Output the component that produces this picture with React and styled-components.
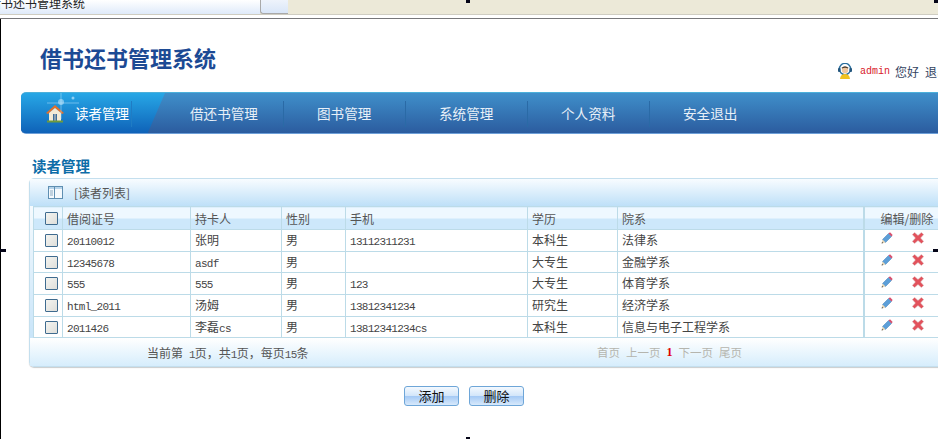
import React from "react";
import styled, { createGlobalStyle } from "styled-components";

const cjk = `"Noto Sans CJK SC", "Liberation Sans", sans-serif`;
const mono = `"Liberation Mono", "Noto Sans CJK SC", monospace`;

const GlobalStyle = createGlobalStyle`
  html, body {
    margin: 0;
    padding: 0;
    background: #fff;
    overflow: hidden;
  }
  body {
    font-family: ${cjk};
    font-size: 12px;
    color: #444;
  }
`;

const Frame = styled.div`
  position: relative;
  width: 938px;
  height: 439px;
  overflow: hidden;
`;

const BrowserStrip = styled.div`
  display: flex;
  height: 14px;
  background: #ece9d8;
  border-bottom: 1px solid #cfcdc2;
  box-shadow: 0 3px 0 #fff, 0 4px 0 #77777a;
`;

const WindowTitle = styled.div`
  width: 260px;
  overflow: hidden;
  background: linear-gradient(#ffffff, #dfeafa);
  color: #222;
  font-size: 12px;
  line-height: 6px;
  white-space: nowrap;
  text-indent: -11px;
`;

const WindowTab = styled.div`
  width: 27px;
  background: linear-gradient(#eef3fb, #d9e6f8);
  border: 1px solid #a9a9a9;
  border-top: none;
  border-right: none;
  border-bottom-left-radius: 3px;
`;

const Page = styled.div`
  width: 1100px;
  height: 420px;
  margin-top: 4px;
  border-left: 1px solid #000;
  display: flex;
  flex-direction: column;
`;

const Header = styled.div`
  display: flex;
  justify-content: space-between;
  height: 73px;
  width: 948px;
`;

const SiteTitle = styled.h1`
  margin: 24px 0 0 39px;
  font-size: 22px;
  line-height: 28px;
  font-weight: 700;
  color: #1c4a94;
`;

const UserInfo = styled.div`
  display: flex;
  align-items: center;
  align-self: flex-start;
  margin-top: 43px;
  height: 18px;
  color: #33435f;
  font-size: 12px;
`;

const UserName = styled.span`
  margin: 0 5px 0 7px;
  font-family: ${mono};
  font-size: 10px;
  color: #d8202a;
`;

const LogoutLink = styled.span`
  margin-left: 6px;
`;

const Nav = styled.nav`
  display: flex;
  flex-shrink: 0;
  box-sizing: border-box;
  height: 42px;
  margin-left: 20px;
  border-radius: 5px 0 0 5px;
  border-top: 1px solid #4cb0da;
  border-bottom: 1px solid #6d9fd8;
  background: linear-gradient(#3f8fca, #2b5c9f);
  overflow: hidden;
`;

const ActiveTab = styled.div`
  position: relative;
  display: flex;
  align-items: center;
  flex-shrink: 0;
  width: 144px;
  margin-right: -3px;
  padding-left: 24px;
  box-sizing: border-box;
  color: #fff;
  font-size: 13.5px;
  background: linear-gradient(#27a7e6, #0f62b8);
  clip-path: polygon(0 0, 100% 0, 88% 100%, 0 100%);
`;

const ActiveLabel = styled.span`
  margin-left: 10px;
`;

const Sparkle = styled.svg`
  position: absolute;
  left: 18px;
  top: 0;
`;

const TabDivider = styled.i`
  position: absolute;
  left: 110px;
  top: 8px;
  bottom: 6px;
  width: 1px;
  background: #1f7cc4;
`;

const NavItem = styled.div`
  display: flex;
  align-items: center;
  width: 122px;
  padding-left: ${(p) => (p.$first ? 28 : 33)}px;
  box-sizing: border-box;
  flex-shrink: 0;
  color: #e8f0f8;
  font-size: 13.6px;
  position: relative;
  &::after {
    content: "";
    position: absolute;
    right: 0;
    top: 8px;
    bottom: 6px;
    width: 1px;
    background: #2a6aa6;
    opacity: ${(p) => (p.$last ? 0 : 1)};
  }
`;

const SectionTitle = styled.h2`
  margin: 23px 0 3px 31px;
  font-size: 14.5px;
  line-height: 18px;
  font-weight: 700;
  color: #0d6da8;
`;

const Panel = styled.section`
  margin-left: 28px;
  padding: 0 0 0 3px;
  border: 1px solid #c4dfee;
  border-radius: 5px 0 0 5px;
  box-shadow: 0 1px 1px #c9ccce;
  background: linear-gradient(#ffffff, #bfe0f8);
`;

const PanelHead = styled.div`
  display: flex;
  align-items: center;
  height: 27px;
  margin-left: -3px;
  padding-left: 18px;
  color: #555;
  background: linear-gradient(#f8fcff, #bee0f8);
`;

const PanelHeadLabel = styled.span`
  margin-left: 11px;
`;

const Table = styled.table`
  table-layout: fixed;
  width: 1000px;
  border-collapse: collapse;
  background: #fff;
`;

const Col = styled.col`
  width: ${(p) => p.$w}px;
`;

const HeadCell = styled.th`
  height: 22px;
  padding: 0 0 0 4px;
  border: 1px solid #bcdbe8;
  font-weight: 400;
  text-align: left;
  color: #555;
  background: linear-gradient(#eef8ff 50%, #cde8fb 50%);
`;

const Cell = styled.td`
  height: 21.7px;
  padding: 0 0 2px 4px;
  box-sizing: border-box;
  border: 1px solid #bcdbe8;
  color: #444;
  white-space: nowrap;
`;

const CheckCell = styled(Cell)`
  padding: 0;
`;

const CheckHead = styled(HeadCell)`
  padding: 0;
`;

const Box = styled.input.attrs({ type: "checkbox" })`
  appearance: none;
  display: block;
  width: 13px;
  height: 13px;
  margin: 0 0 0 11px;
  border: 1px solid #3f6b8f;
  border-radius: 1px;
  background: linear-gradient(135deg, #f4f4f0, #dededa);
  box-sizing: border-box;
`;

const Latin = styled.span`
  font-family: ${mono};
  font-size: 11px;
  letter-spacing: -0.7px;
`;

const ActionHead = styled(HeadCell)`
  padding-left: 16px;
  border-left-width: 2px;
`;

const ActionCell = styled(Cell)`
  padding-left: 16px;
  border-left-width: 2px;
`;

const Actions = styled.div`
  display: flex;
  align-items: center;
  gap: 19px;
  margin-top: -2px;
`;

const PanelFoot = styled.div`
  display: flex;
  align-items: center;
  height: 28px;
  margin-left: -3px;
  padding-left: 117px;
  color: #555;
  background: linear-gradient(#ffffff, #d6edfc);
`;

const PageSummary = styled.span`
  width: 450px;
  white-space: nowrap;
`;

const Pager = styled.div`
  display: flex;
  align-items: center;
  gap: 6px;
  font-size: 11.5px;
  color: #b5b5ae;
`;

const CurrentPage = styled.b`
  font-family: "Liberation Serif", serif;
  font-size: 12px;
  color: #e00000;
`;

const ButtonRow = styled.div`
  display: flex;
  gap: 10px;
  margin: 19px 0 0 403px;
`;

const ActionButton = styled.button`
  width: 55px;
  height: 20px;
  padding: 0;
  border: 1px solid #6ea6d8;
  border-radius: 3px;
  font-family: ${cjk};
  font-size: 13px;
  line-height: 16px;
  color: #111;
  background: linear-gradient(#f4f9fe 0%, #d3e6fa 48%, #a3c9f5 50%, #d8e9fb 100%);
`;

/* little black resize handles on the window edges */
const Handle = styled.i`
  position: absolute;
  display: block;
  background: #050518;
  left: ${(p) => p.$x}px;
  top: ${(p) => p.$y}px;
  width: ${(p) => p.$w}px;
  height: ${(p) => p.$h}px;
`;

const HouseIcon = () => (
  <svg width="20" height="20" viewBox="0 0 20 20">
    <path d="M1 10 L10 2 L19 10 L17 11 L10 5 L3 11 Z" fill="#e0702c" />
    <path d="M4 10 L10 5 L16 10 V18 H4 Z" fill="#f3ecd6" />
    <rect x="8" y="11" width="4" height="7" fill="#3e6f9a" />
    <rect x="9.6" y="11" width="0.8" height="7" fill="#f3ecd6" />
    <rect x="2" y="17.5" width="16" height="2" fill="#6f9a3c" />
  </svg>
);

const UserIcon = () => (
  <svg width="16" height="16" viewBox="0 0 16 16">
    <circle cx="8" cy="6" r="5.6" fill="none" stroke="#2a6f9f" strokeWidth="1.4" />
    <rect x="1" y="5" width="2.6" height="4" rx="1" fill="#24577e" />
    <rect x="12.4" y="5" width="2.6" height="4" rx="1" fill="#24577e" />
    <circle cx="8" cy="7" r="3.2" fill="#f0c8a0" />
    <path d="M4.5 4.8 Q8 1.8 11.5 4.8 L11 5.6 Q8 4 5 5.6 Z" fill="#4a3a2c" />
    <path d="M3 16 Q3.5 11 8 11 Q12.5 11 13 16 Z" fill="#f2c21f" />
  </svg>
);

const ListIcon = () => (
  <svg width="15" height="13" viewBox="0 0 15 13">
    <rect x="0.5" y="0.5" width="14" height="12" fill="#f4f9fd" stroke="#5f8fb2" />
    <rect x="1" y="1" width="13" height="2" fill="#b7d4ea" />
    <path d="M6.5 1 V12" stroke="#5f8fb2" />
    <path d="M2 5 H5 M2 7 H5 M2 9 H5" stroke="#8aa9c1" />
  </svg>
);

const PencilIcon = () => (
  <svg width="12" height="12" viewBox="0 0 12 12">
    <path d="M1.5 7.5 L7.5 1.5 L10.5 4.5 L4.5 10.5 Z" fill="#5d9fd8" stroke="#3f7fb6" strokeWidth="0.5" />
    <path d="M7.5 1.5 L9 0.3 L11.7 3 L10.5 4.5 Z" fill="#d8506e" />
    <path d="M1.5 7.5 L4.5 10.5 L0.6 11.4 Z" fill="#e8d8b8" />
    <path d="M0.6 11.4 L1.1 9.7 L2.3 10.9 Z" fill="#555" />
  </svg>
);

const CrossIcon = () => (
  <svg width="12" height="12" viewBox="0 0 12 12">
    <path
      d="M2.6 0.4 L6 3.4 L9.4 0.4 L11.7 2.6 L8.6 6 L11.7 9.4 L9.4 11.6 L6 8.6 L2.6 11.6 L0.3 9.4 L3.4 6 L0.3 2.6 Z"
      fill="#e2525c"
      stroke="#d9c4c4"
      strokeWidth="0.5"
    />
  </svg>
);

const NAV_ITEMS = ["借还书管理", "图书管理", "系统管理", "个人资料", "安全退出"];

const COLUMNS = [
  { title: "借阅证号", w: 128 },
  { title: "持卡人", w: 91 },
  { title: "性别", w: 64 },
  { title: "手机", w: 182 },
  { title: "学历", w: 90 },
  { title: "院系", w: 246 },
];

const READERS = [
  ["20110012", "张明", "男", "13112311231", "本科生", "法律系"],
  ["12345678", "asdf", "男", "", "大专生", "金融学系"],
  ["555", "555", "男", "123", "大专生", "体育学系"],
  ["html_2011", "汤姆", "男", "13812341234", "研究生", "经济学系"],
  ["2011426", "李磊cs", "男", "13812341234cs", "本科生", "信息与电子工程学系"],
];

// Latin runs are set smaller so they sit at half the width of a CJK glyph
const mixed = (text) =>
  text
    .split(/([\x20-\x7e]+)/)
    .filter(Boolean)
    .map((part, i) =>
      /[\x20-\x7e]/.test(part) ? <Latin key={i}>{part}</Latin> : <span key={i}>{part}</span>
    );

const App = () => (
  <Frame>
    <GlobalStyle />
    <BrowserStrip>
      <WindowTitle>借书还书管理系统</WindowTitle>
      <WindowTab />
    </BrowserStrip>
    <Page>
      <Header>
        <SiteTitle>借书还书管理系统</SiteTitle>
        <UserInfo>
          <UserIcon />
          <UserName>admin</UserName>
          您好
          <LogoutLink>退出</LogoutLink>
        </UserInfo>
      </Header>
      <Nav>
        <ActiveTab>
          <Sparkle width="50" height="30" viewBox="0 0 50 30">
            <path d="M22 0 V26 M8 10 H40" stroke="#bfe8ff" strokeWidth="0.8" opacity="0.6" />
            <circle cx="22" cy="9" r="3" fill="#d8f2ff" opacity="0.5" />
            <circle cx="34" cy="5" r="1.5" fill="#d8f2ff" opacity="0.6" />
          </Sparkle>
          <HouseIcon />
          <ActiveLabel>读者管理</ActiveLabel>
          <TabDivider />
        </ActiveTab>
        {NAV_ITEMS.map((item, i) => (
          <NavItem key={item} $first={i === 0} $last={i === NAV_ITEMS.length - 1}>
            {item}
          </NavItem>
        ))}
      </Nav>
      <SectionTitle>读者管理</SectionTitle>
      <Panel>
        <PanelHead>
          <ListIcon />
          <PanelHeadLabel>[读者列表]</PanelHeadLabel>
        </PanelHead>
        <Table>
          <colgroup>
            <Col $w={29} />
            {COLUMNS.map((c) => (
              <Col key={c.title} $w={c.w} />
            ))}
            <Col $w={170} />
          </colgroup>
          <thead>
            <tr>
              <CheckHead>
                <Box />
              </CheckHead>
              {COLUMNS.map((c) => (
                <HeadCell key={c.title}>{c.title}</HeadCell>
              ))}
              <ActionHead>编辑/删除</ActionHead>
            </tr>
          </thead>
          <tbody>
            {READERS.map((row) => (
              <tr key={row[0]}>
                <CheckCell>
                  <Box />
                </CheckCell>
                {row.map((value, i) => (
                  <Cell key={i}>{mixed(value)}</Cell>
                ))}
                <ActionCell>
                  <Actions>
                    <PencilIcon />
                    <CrossIcon />
                  </Actions>
                </ActionCell>
              </tr>
            ))}
          </tbody>
        </Table>
        <PanelFoot>
          <PageSummary>{mixed("当前第  1页，共1页，每页15条")}</PageSummary>
          <Pager>
            <span>首页</span>
            <span>上一页</span>
            <CurrentPage>1</CurrentPage>
            <span>下一页</span>
            <span>尾页</span>
          </Pager>
        </PanelFoot>
      </Panel>
      <ButtonRow>
        <ActionButton>添加</ActionButton>
        <ActionButton>删除</ActionButton>
      </ButtonRow>
    </Page>
    <Handle $x={466} $y={0} $w={4} $h={3} />
    <Handle $x={0} $y={249} $w={6} $h={3} />
    <Handle $x={933} $y={249} $w={5} $h={3} />
    <Handle $x={466} $y={437} $w={4} $h={2} />
    <Handle $x={934} $y={0} $w={4} $h={3} />
  </Frame>
);

export default App;
